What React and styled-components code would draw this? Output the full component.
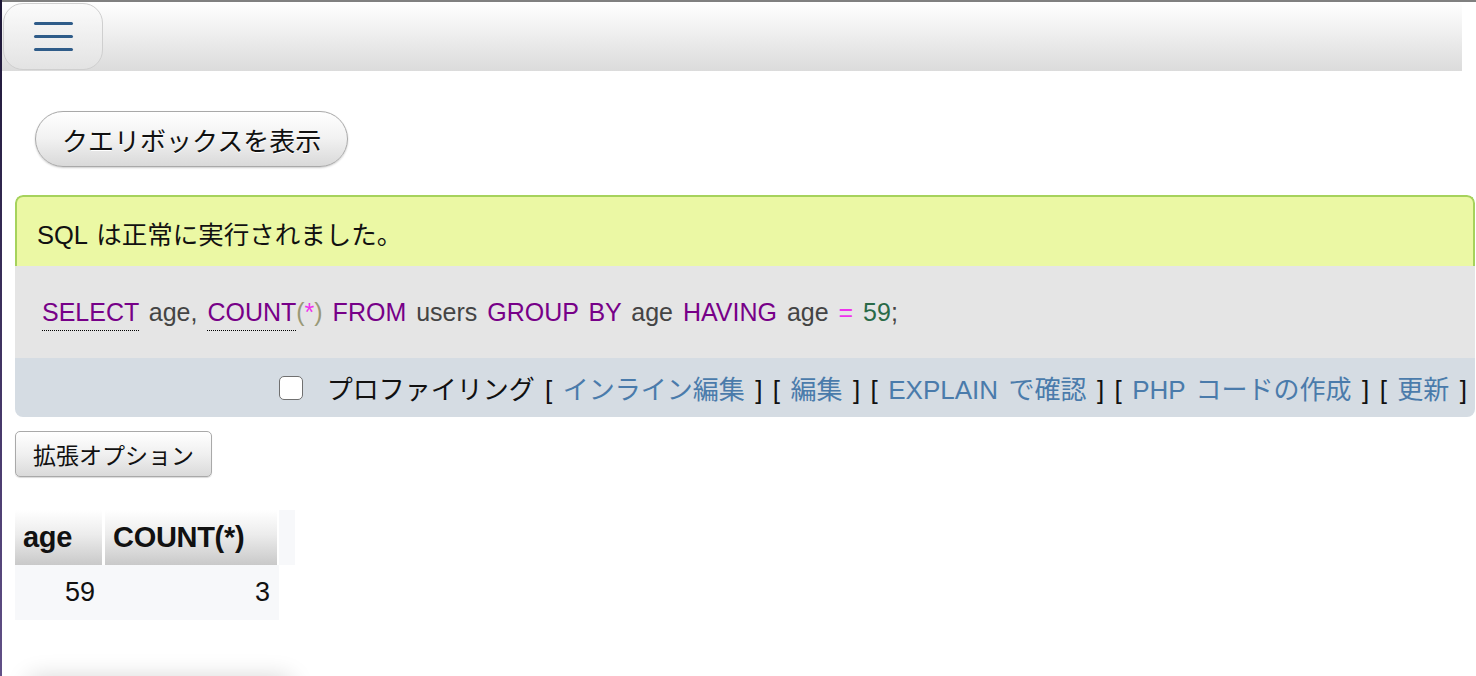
import React from 'react';
import styled, { createGlobalStyle } from 'styled-components';

const GlobalStyle = createGlobalStyle`
  html, body {
    margin: 0;
    padding: 0;
  }
  html {
    background: linear-gradient(180deg, #1d1736 0%, #4a3b6e 60%, #6a5890 100%);
  }
  body {
    font-family: "Liberation Sans", "Noto Sans CJK JP", sans-serif;
    color: #111;
    overflow: hidden;
  }
`

const Page = styled.div`
  margin-left: 2px;
  min-height: 100vh;
  background: #fff;
  border-top: 2px solid #808080;
`

const Header = styled.div`
  height: 69px;
  margin-right: 14px;
  display: flex;
  align-items: center;
  padding-left: 1px;
  background: linear-gradient(180deg, #ffffff 0%, #efefef 45%, #dbdbdb 100%);
`

const MenuButton = styled.div`
  width: 98px;
  height: 65px;
  border: 1px solid #cfcfcf;
  border-radius: 20px;
  background: linear-gradient(180deg, #fbfbfb 0%, #e3e3e3 100%);
  display: flex;
  flex-direction: column;
  align-items: center;
  justify-content: center;
  gap: 10px;
`

const MenuLine = styled.span`
  display: block;
  width: 39px;
  height: 3px;
  border-radius: 2px;
  background: #2f5c89;
`

const Content = styled.div`
  padding: 0 1px 0 13px;
`

const QueryButton = styled.div`
  display: inline-flex;
  align-items: center;
  height: 54px;
  margin: 40px 0 0 20px;
  padding: 0 26px;
  border: 1px solid #a9a9a9;
  border-radius: 28px;
  background: linear-gradient(180deg, #ffffff 0%, #f1f1f1 50%, #d9d9d9 100%);
  box-shadow: 0 1px 2px rgba(0, 0, 0, 0.2);
  font-size: 26px;
  text-shadow: 0 1px 0 #fff;
`

const ResultBox = styled.div`
  margin-top: 28px;
  border-radius: 8px;
  overflow: hidden;
`

const Message = styled.div`
  height: 46px;
  padding: 23px 0 0 20px;
  background: #ebf8a4;
  border: 2px solid #a6d25c;
  border-bottom: none;
  border-radius: 8px 8px 0 0;
  font-size: 25.5px;
  line-height: 30px;
  word-spacing: 2px;
`

const SqlLine = styled.div`
  height: 92px;
  display: flex;
  align-items: center;
  padding-left: 27px;
  background: #e5e5e5;
`

const Code = styled.span`
  font-size: 25px;
  word-spacing: 3px;
  white-space: pre;
  color: #444;
`

const Token = styled.span`
  color: ${props => props.color};
`

const Keyword = styled.span`
  color: #770088;
  border-bottom: ${props => (props.dotted ? '1px dotted #000' : 'none')};
  padding-bottom: 4px;
`

const Tools = styled.div`
  height: 59px;
  display: flex;
  justify-content: flex-end;
  align-items: center;
  padding-right: 8px;
  background: #d5dce3;
`

const ToolText = styled.span`
  font-size: 26px;
  word-spacing: 3.2px;
  white-space: pre;
`

const Checkbox = styled.span`
  width: 22px;
  height: 22px;
  margin-right: 24px;
  border: 1.5px solid #707070;
  border-radius: 5px;
  background: #fff;
`

const Link = styled.span`
  color: #4a7bab;
`

const OptionsButton = styled.div`
  display: inline-flex;
  align-items: center;
  height: 44px;
  margin-top: 14px;
  padding: 0 17px;
  border: 1px solid #a9a9a9;
  border-radius: 5px;
  background: linear-gradient(180deg, #ffffff 0%, #f0f0f0 50%, #dadada 100%);
  box-shadow: 0 1px 1px rgba(0, 0, 0, 0.15);
  font-size: 23px;
`

const Table = styled.table`
  margin-top: 33px;
  border-spacing: 0;
`

const Th = styled.th`
  height: 55px;
  padding: 0 8px;
  width: ${props => props.w}px;
  box-sizing: border-box;
  text-align: left;
  font-size: 29px;
  font-weight: bold;
  letter-spacing: -0.3px;
  background: ${props => (props.blank ? '#f7f8fa' : 'linear-gradient(180deg, #ffffff 0%, #ececec 45%, #c9c9c9 100%)')};
  border-right: ${props => props.gap || 0}px solid #fff;
`

const Td = styled.td`
  height: 55px;
  padding: 0 ${props => props.pad || 9}px 0 0;
  text-align: right;
  font-size: 27px;
  background: ${props => (props.blank ? '#fff' : '#f7f8fa')};
`

const BottomPanel = styled.div`
  width: 262px;
  height: 80px;
  margin: 58px 0 0 14px;
  background: #fff;
  box-shadow: 0 0 24px rgba(0, 0, 0, 0.18);
  border-radius: 6px;
`

export default function App() {
  return (
    <>
      <GlobalStyle />
      <Page>
        <Header>
          <MenuButton>
            <MenuLine />
            <MenuLine />
            <MenuLine />
          </MenuButton>
        </Header>
        <Content>
          <QueryButton>クエリボックスを表示</QueryButton>
          <ResultBox>
            <Message>SQL は正常に実行されました。</Message>
            <SqlLine>
              <Code>
                <Keyword dotted>SELECT</Keyword>{' age, '}
                <Keyword dotted>COUNT</Keyword>
                <Token color="#999977">(</Token>
                <Token color="#ee33ee">*</Token>
                <Token color="#999977">)</Token>{' '}
                <Keyword>FROM</Keyword>{' users '}
                <Keyword>GROUP BY</Keyword>{' age '}
                <Keyword>HAVING</Keyword>{' age '}
                <Token color="#ee33ee">=</Token>{' '}
                <Token color="#2a6a48">59</Token>;
              </Code>
            </SqlLine>
            <Tools>
              <Checkbox />
              <ToolText>
                {'プロファイリング [ '}<Link>インライン編集</Link>{' ] [ '}<Link>編集</Link>{' ] [ '}
                <Link>EXPLAIN で確認</Link>{' ] [ '}<Link>PHP コードの作成</Link>{' ] [ '}
                <Link>更新</Link>{' ]'}
              </ToolText>
            </Tools>
          </ResultBox>
          <OptionsButton>拡張オプション</OptionsButton>
          <Table>
            <thead>
              <tr>
                <Th w={90} gap={3}>age</Th>
                <Th w={174} gap={2}>COUNT(*)</Th>
                <Th w={16} blank />
              </tr>
            </thead>
            <tbody>
              <tr>
                <Td pad={10}>59</Td>
                <Td pad={9}>3</Td>
                <Td blank />
              </tr>
            </tbody>
          </Table>
          <BottomPanel />
        </Content>
      </Page>
    </>
  );
}
